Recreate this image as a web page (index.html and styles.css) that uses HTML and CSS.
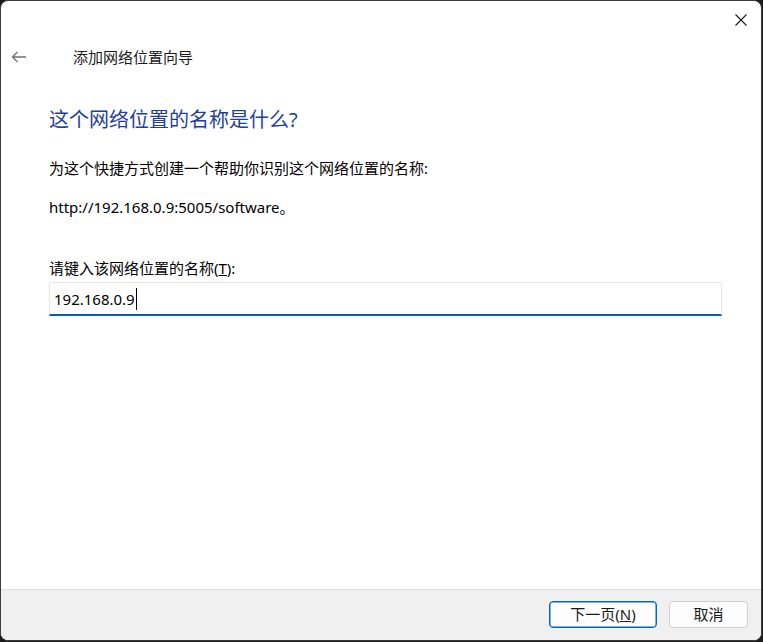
FILE: index.html
```html
<!DOCTYPE html>
<html lang="zh-CN">
<head>
<meta charset="utf-8">
<title>添加网络位置向导</title>
<link rel="stylesheet" href="styles.css">
</head>
<body>
<div class="window">
  <div class="titlebar">
    <div class="close">
      <svg width="12" height="12" viewBox="0 0 12 12"><path d="M0.5 0.5 L11.5 11.5 M11.5 0.5 L0.5 11.5" stroke="#1a1a1a" stroke-width="1.1" fill="none"/></svg>
    </div>
  </div>
  <div class="header">
    <div class="back">
      <svg width="16" height="12" viewBox="0 0 16 12"><path d="M15 6 H1.5 M6.5 1 L1.5 6 L6.5 11" stroke="#707070" stroke-width="1.3" fill="none"/></svg>
    </div>
    <div class="wtitle">添加网络位置向导</div>
  </div>
  <div class="content">
    <h1 class="heading">这个网络位置的名称是什么?</h1>
    <p class="line desc">为这个快捷方式创建一个帮助你识别这个网络位置的名称:</p>
    <p class="line url">http://192.168.0.9:5005/software。</p>
    <p class="line label">请键入该网络位置的名称(<u>T</u>):</p>
    <div class="input"><span class="val">192.168.0.9</span><span class="caret"></span></div>
  </div>
  <div class="footer">
    <button class="btn primary">下一页(<u>N</u>)</button>
    <button class="btn">取消</button>
  </div>
</div>
</body>
</html>
```
FILE: styles.css
```css
html, body {
  margin: 0;
  padding: 0;
  background: #1c1c1c;
}
body {
  width: 763px;
  height: 642px;
  font-family: "Noto Sans", "Noto Sans CJK SC", sans-serif;
  font-size: 15px;
  color: #000;
}
.window {
  box-sizing: border-box;
  width: 762px;
  height: 641px;
  border: 1px solid #3a3a3a;
  border-radius: 8px;
  background: #fff;
  display: flex;
  flex-direction: column;
  overflow: hidden;
}
.titlebar {
  height: 38px;
  display: flex;
  justify-content: flex-end;
  align-items: center;
}
.close {
  width: 12px;
  height: 12px;
  margin-right: 14px;
  margin-top: 0px;
  display: flex;
}
.header {
  height: 36px;
  display: flex;
  align-items: center;
}
.back {
  width: 16px;
  height: 12px;
  margin-left: 10px;
  display: flex;
}
.wtitle {
  margin-left: 46px;
  line-height: 36px;
  color: #1a1a1a;
}
.content {
  padding-left: 48px;
  padding-right: 39px;
}
.heading {
  margin: 31px 0 0 0;
  font-size: 20px;
  font-weight: normal;
  line-height: 28px;
  color: #1e3f9c;
}
.line {
  margin: 0;
  line-height: 20px;
}
.desc { margin-top: 24px; }
.url { margin-top: 19px; }
.label { margin-top: 41px; }
.input {
  box-sizing: border-box;
  margin-top: 4px;
  height: 34px;
  border: 1px solid #e6e6e6;
  border-bottom: 2px solid #005fb8;
  border-radius: 2px 2px 0 0;
  padding-left: 4px;
  display: flex;
  align-items: center;
}
.val { line-height: 20px; }
.caret {
  width: 1px;
  height: 22px;
  background: #000;
  margin-left: 1px;
}
.footer {
  margin-top: auto;
  height: 50px;
  border-top: 1px solid #dfdfdf;
  background: #f0f0f0;
  display: flex;
  justify-content: flex-end;
  align-items: flex-start;
  padding-top: 11px;
  padding-right: 13px;
  gap: 12px;
  box-sizing: border-box;
  height: 51px;
}
.btn {
  box-sizing: border-box;
  height: 27px;
  width: 79px;
  border: 1px solid #d0d0d0;
  border-radius: 4px;
  background: #fdfdfd;
  font-family: "Noto Sans", "Noto Sans CJK SC", sans-serif;
  font-size: 15px;
  color: #1a1a1a;
  padding: 0;
  line-height: 23px;
}
.btn.primary {
  width: 108px;
  border: 1px solid #0067c0;
  box-shadow: inset 0 0 0 0.5px #0067c0;
}
```
